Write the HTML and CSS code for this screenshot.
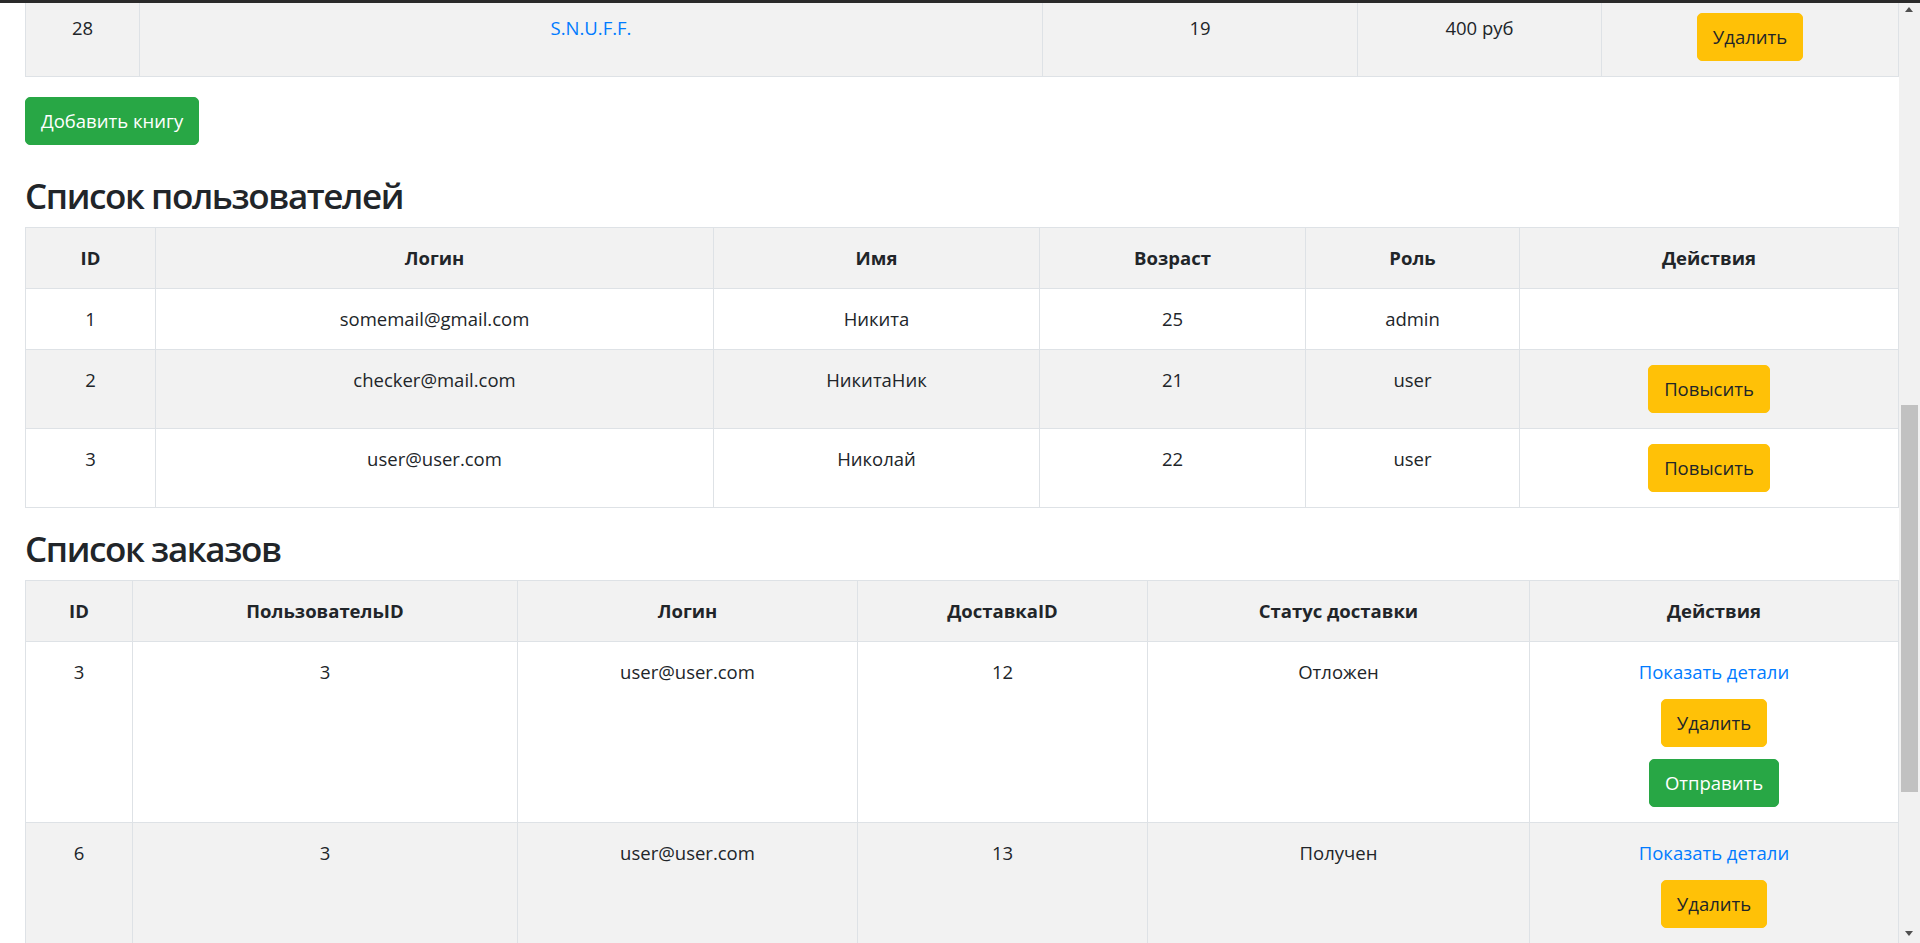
FILE: index.html
```html
<!DOCTYPE html>
<html lang="ru">
<head>
<meta charset="utf-8">
<title>Админ-панель</title>
<link rel="stylesheet" href="styles.css">
</head>
<body>
<div class="window-edge"></div>
<div class="scrollbar">
  <div class="sb-arrow sb-up"></div>
  <div class="sb-thumb"></div>
  <div class="sb-arrow sb-down"></div>
</div>

<main class="page">
  <table class="tbl tbl-books">
    <colgroup>
      <col class="c-b1"><col class="c-b2"><col class="c-b3"><col class="c-b4"><col class="c-b5">
    </colgroup>
    <tbody>
      <tr class="alt">
        <td>28</td>
        <td><a class="link" href="#">S.N.U.F.F.</a></td>
        <td>19</td>
        <td>400 руб</td>
        <td><button class="btn btn-warning">Удалить</button></td>
      </tr>
    </tbody>
  </table>

  <div class="add-row">
    <button class="btn btn-success">Добавить книгу</button>
  </div>

  <h2 class="section-title">Список пользователей</h2>
  <table class="tbl tbl-users">
    <colgroup>
      <col class="c-u1"><col class="c-u2"><col class="c-u3"><col class="c-u4"><col class="c-u5"><col class="c-u6">
    </colgroup>
    <thead>
      <tr class="alt">
        <th>ID</th><th>Логин</th><th>Имя</th><th>Возраст</th><th>Роль</th><th>Действия</th>
      </tr>
    </thead>
    <tbody>
      <tr>
        <td>1</td><td>somemail@gmail.com</td><td>Никита</td><td>25</td><td>admin</td><td></td>
      </tr>
      <tr class="alt">
        <td>2</td><td>checker@mail.com</td><td>НикитаНик</td><td>21</td><td>user</td>
        <td><button class="btn btn-warning">Повысить</button></td>
      </tr>
      <tr>
        <td>3</td><td>user@user.com</td><td>Николай</td><td>22</td><td>user</td>
        <td><button class="btn btn-warning">Повысить</button></td>
      </tr>
    </tbody>
  </table>

  <h2 class="section-title">Список заказов</h2>
  <table class="tbl tbl-orders">
    <colgroup>
      <col class="c-o1"><col class="c-o2"><col class="c-o3"><col class="c-o4"><col class="c-o5"><col class="c-o6">
    </colgroup>
    <thead>
      <tr class="alt">
        <th>ID</th><th>ПользовательID</th><th>Логин</th><th>ДоставкаID</th><th>Статус доставки</th><th>Действия</th>
      </tr>
    </thead>
    <tbody>
      <tr>
        <td>3</td><td>3</td><td>user@user.com</td><td>12</td><td>Отложен</td>
        <td>
          <div class="actions">
            <a class="link" href="#">Показать детали</a>
            <button class="btn btn-warning">Удалить</button>
            <button class="btn btn-success">Отправить</button>
          </div>
        </td>
      </tr>
      <tr class="alt">
        <td>6</td><td>3</td><td>user@user.com</td><td>13</td><td>Получен</td>
        <td>
          <div class="actions">
            <a class="link" href="#">Показать детали</a>
            <button class="btn btn-warning">Удалить</button>
          </div>
        </td>
      </tr>
    </tbody>
  </table>
</main>
</body>
</html>
```
FILE: styles.css
```css
html, body {
  margin: 0;
  padding: 0;
  height: 943px;
  overflow: hidden;
  background: #fff;
}

body {
  font-family: "Open Sans", "Noto Sans", sans-serif;
  font-size: 18.5px;
  line-height: 30px;
  color: #212529;
}

/* dark window edge across the top */
.window-edge {
  position: fixed;
  top: 0;
  left: 0;
  right: 0;
  height: 3px;
  background: #2a2a2a;
  z-index: 10;
}

/* browser scrollbar drawn over the right edge */
.scrollbar {
  position: fixed;
  top: 0;
  right: 0;
  width: 21px;
  height: 943px;
  background: #f1f1f1;
  z-index: 5;
}
.sb-thumb {
  position: absolute;
  left: 2px;
  right: 2px;
  top: 405px;
  height: 387px;
  background: #c1c1c1;
}
.sb-arrow {
  position: absolute;
  left: 6px;
  width: 0;
  height: 0;
  border-left: 4.5px solid transparent;
  border-right: 4.5px solid transparent;
}
.sb-up {
  top: 7px;
  border-bottom: 5px solid #505050;
}
.sb-down {
  top: 931px;
  border-top: 5px solid #505050;
}

.page {
  width: 1899px;
  box-sizing: border-box;
  padding-left: 25px;
}

.tbl {
  width: 100%;
  table-layout: fixed;
  border-collapse: collapse;
}
.tbl th,
.tbl td {
  border: 1px solid #dee2e6;
  padding: 15px;
  text-align: center;
  vertical-align: top;
}
.tbl th {
  font-weight: 700;
}
.tbl tr.alt {
  background: #f2f2f2;
}

.tbl-books {
  margin-top: -3px;
  margin-bottom: 20px;
}
.tbl-users {
  margin-bottom: 17px;
}

.c-b1 { width: 114px; }
.c-b2 { width: 903px; }
.c-b3 { width: 315px; }
.c-b4 { width: 244px; }
.c-b5 { width: auto; }

.c-u1 { width: 130px; }
.c-u2 { width: 558px; }
.c-u3 { width: 326px; }
.c-u4 { width: 266px; }
.c-u5 { width: 214px; }
.c-u6 { width: auto; }

.c-o1 { width: 107px; }
.c-o2 { width: 385px; }
.c-o3 { width: 340px; }
.c-o4 { width: 290px; }
.c-o5 { width: 382px; }
.c-o6 { width: auto; }

.link {
  color: #007bff;
  text-decoration: none;
}

.btn {
  display: inline-block;
  box-sizing: border-box;
  height: 48px;
  padding: 8px 15px;
  border: 1px solid transparent;
  border-radius: 5px;
  font-family: inherit;
  font-size: 18.5px;
  line-height: 30px;
  vertical-align: top;
  cursor: pointer;
}
.btn-warning {
  background: #ffc107;
  border-color: #ffc107;
  color: #212529;
}
.btn-success {
  background: #28a745;
  border-color: #28a745;
  color: #fff;
}

.add-row {
  height: 48px;
  margin-bottom: 27px;
}

.section-title {
  margin: 0 0 7px;
  font-size: 35px;
  line-height: 48px;
  font-weight: 600;
  letter-spacing: -1.4px;
}

.actions {
  display: flex;
  flex-direction: column;
  align-items: center;
  gap: 12px;
}
```
